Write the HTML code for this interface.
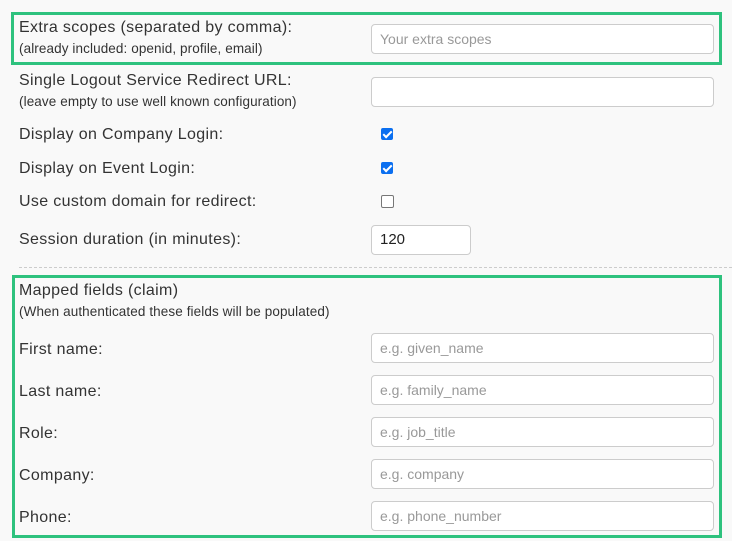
<!DOCTYPE html>
<html><head><style>
body{margin:0;background:#f9f9f9;width:732px;height:541px;position:relative;overflow:hidden;font-family:"Liberation Sans",sans-serif;color:#333}
.a{position:absolute;white-space:nowrap}
.l{font-size:16px;line-height:18px;letter-spacing:0.35px}
.s{font-size:13.5px;line-height:14px;letter-spacing:0.1px;transform:scaleY(1.05)}
.in{position:absolute;left:371px;width:341px;height:28px;border:1px solid #ccc;border-radius:4px;background:#fff;box-sizing:content-box;font-size:14px;color:#999;line-height:28px;text-indent:8px}
.box{position:absolute;border:3px solid #2ec27e;box-sizing:border-box}
.cb{position:absolute;left:381px;width:12px;height:12px;border-radius:2px}
.on{background:#0b6ff0}
.off{border:1px solid #777;background:#fff;width:11px;height:11px}
.on:after{content:"";position:absolute;left:4px;top:1px;width:3px;height:7px;border:solid #fff;border-width:0 2px 2px 0;transform:rotate(45deg)}
</style></head><body>
<div class="box" style="left:11px;top:12px;width:711px;height:53px"></div>
<div class="a l" style="left:19px;top:19px">Extra scopes (separated by comma):</div>
<div class="a s" style="left:19px;top:42px">(already included: openid, profile, email)</div>
<div class="in" style="top:24px">Your extra scopes</div>
<div class="a l" style="left:19px;top:72px">Single Logout Service Redirect URL:</div>
<div class="a s" style="left:19px;top:95px">(leave empty to use well known configuration)</div>
<div class="in" style="top:77px"></div>
<div class="a l" style="left:19px;top:126px">Display on Company Login:</div>
<div class="cb on" style="top:128px"></div>
<div class="a l" style="left:19px;top:160px">Display on Event Login:</div>
<div class="cb on" style="top:162px"></div>
<div class="a l" style="left:19px;top:193px">Use custom domain for redirect:</div>
<div class="cb off" style="top:195px"></div>
<div class="a l" style="left:19px;top:231px">Session duration (in minutes):</div>
<div class="in" style="top:225px;width:98px;color:#222;font-size:15px">120</div>
<div class="a" style="left:19px;top:267px;width:713px;border-top:1px dashed #ccc"></div>
<div class="box" style="left:12px;top:275px;width:710px;height:263px"></div>
<div class="a l" style="left:19px;top:282px">Mapped fields (claim)</div>
<div class="a s" style="left:19px;top:305px">(When authenticated these fields will be populated)</div>
<div class="a l" style="left:19px;top:341px">First name:</div><div class="in" style="top:333px">e.g. given_name</div>
<div class="a l" style="left:19px;top:383px">Last name:</div><div class="in" style="top:375px">e.g. family_name</div>
<div class="a l" style="left:19px;top:425px">Role:</div><div class="in" style="top:417px">e.g. job_title</div>
<div class="a l" style="left:19px;top:467px">Company:</div><div class="in" style="top:459px">e.g. company</div>
<div class="a l" style="left:19px;top:509px">Phone:</div><div class="in" style="top:501px">e.g. phone_number</div>
</body></html>
